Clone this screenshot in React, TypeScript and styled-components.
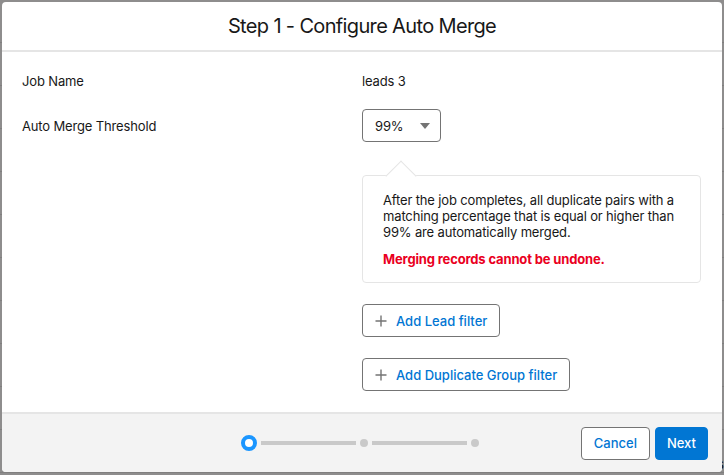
import styled, { createGlobalStyle } from 'styled-components';

const GlobalStyle = createGlobalStyle`
  html, body {
    margin: 0;
    padding: 0;
  }
  body {
    font-family: Inter, "Liberation Sans", Arial, sans-serif;
    font-size: 13px;
    letter-spacing: -0.15px;
    color: #181818;
    background: #fff;
  }
  * {
    box-sizing: border-box;
  }
`;

const Page = styled.div`
  position: relative;
  width: 724px;
  height: 475px;
  overflow: hidden;
  background: #fff;
`;

const BgRow = styled.div`
  height: 43px;
  border-bottom: 1px solid #e5e5e5;
  display: flex;
  align-items: flex-end;
  padding: 0 0 0 8px;
  font-size: 13px;
  color: #181818;
`;

const BgCell = styled.span<{ $w: number }>`
  width: ${(p) => p.$w}px;
  flex: none;
  white-space: nowrap;
`;

const Backdrop = styled.div`
  position: absolute;
  inset: 0;
  background: rgba(8, 7, 7, 0.46);
  padding: 2px;
`;

const Modal = styled.div`
  width: 720px;
  height: 470px;
  background: #fff;
  border-radius: 4px;
  display: flex;
  flex-direction: column;
  overflow: hidden;
`;

const Header = styled.header`
  padding: 12px 16px 11px;
  border-bottom: 2px solid #e5e5e5;
  text-align: center;
`;

const Title = styled.h2`
  margin: 0;
  font-size: 20px;
  line-height: 25px;
  font-weight: 400;
  letter-spacing: -0.65px;
  color: #181818;
`;

const Body = styled.div`
  flex: 1;
  padding: 12px 21px 0 20px;
  display: flex;
  flex-direction: column;
  gap: 12px;
`;

const Row = styled.div`
  display: grid;
  grid-template-columns: 340px 1fr;
  align-items: center;
  min-height: 33px;
`;

const Label = styled.span`
  line-height: 18px;
`;

const Value = styled.div`
  display: flex;
  flex-direction: column;
  align-items: flex-start;
`;

const Select = styled.div`
  width: 79px;
  height: 33px;
  border: 1px solid #747474;
  border-radius: 4px;
  display: flex;
  align-items: center;
  justify-content: space-between;
  padding: 0 10px 0 12px;
  font-size: 13px;
`;

const Caret = styled.span`
  width: 0;
  height: 0;
  border-left: 5px solid transparent;
  border-right: 5px solid transparent;
  border-top: 6px solid #747474;
`;

const Stack = styled.div`
  display: flex;
  flex-direction: column;
  align-items: flex-start;
  gap: 21px;
  margin-top: -12px;
`;

const Popover = styled.div`
  position: relative;
  margin-top: 33px;
  width: 339px;
  border: 1px solid #e5e5e5;
  border-radius: 4px;
  padding: 16px 20px 15px;
  background: #fff;

  &::before {
    content: '';
    position: absolute;
    top: -11px;
    left: 27px;
    width: 21px;
    height: 21px;
    background: #fff;
    border-left: 1px solid #e5e5e5;
    border-top: 1px solid #e5e5e5;
    transform: rotate(45deg);
  }
`;

const PopText = styled.p<{ $danger?: boolean }>`
  position: relative;
  margin: 0;
  line-height: 16px;
  color: ${(p) => (p.$danger ? '#ea001e' : '#181818')};
  font-weight: ${(p) => (p.$danger ? 700 : 400)};
  & + & {
    margin-top: 11px;
  }
`;

const Button = styled.button<{ $brand?: boolean }>`
  height: 33px;
  border-radius: 4px;
  padding: 0 ${(p) => (p.$brand ? '11px' : '12px')};
  font-family: inherit;
  font-size: 13px;
  font-weight: 500;
  letter-spacing: 0;
  display: inline-flex;
  align-items: center;
  gap: 9px;
  cursor: pointer;
  border: 1px solid ${(p) => (p.$brand ? '#0176d3' : '#747474')};
  background: ${(p) => (p.$brand ? '#0176d3' : '#fff')};
  color: ${(p) => (p.$brand ? '#fff' : '#0176d3')};
`;

const Footer = styled.footer`
  border-top: 2px solid #e5e5e5;
  background: #f3f3f3;
  height: 60px;
  padding: 0 14px 0 14px;
  display: grid;
  grid-template-columns: 1fr auto 1fr;
  align-items: center;
`;

const Actions = styled.div`
  display: flex;
  justify-content: flex-end;
  gap: 5px;
`;

const Progress = styled.div`
  display: flex;
  align-items: center;
  margin-left: -4px;
`;

const Step = styled.span<{ $active?: boolean }>`
  flex: none;
  width: ${(p) => (p.$active ? '16px' : '8px')};
  height: ${(p) => (p.$active ? '16px' : '8px')};
  border-radius: 50%;
  background: ${(p) => (p.$active ? '#fff' : '#c9c9c9')};
  border: ${(p) => (p.$active ? '4px solid #1b96ff' : 'none')};
`;

const Track = styled.span`
  width: 95px;
  height: 4px;
  background: #c9c9c9;
  margin: 0 4px;
`;

function Plus() {
  return (
    <svg width="12" height="12" viewBox="0 0 12 12" fill="none">
      <path d="M6 0.5v11M0.5 6h11" stroke="#747474" strokeWidth="1.4" />
    </svg>
  );
}

export default function App() {
  const bgRows = Array.from({ length: 10 });
  return (
    <>
      <GlobalStyle />
      <Page>
        {bgRows.map((_, i) => (
          <BgRow key={i} />
        ))}
        <BgRow>
          <BgCell $w={280}>Lead</BgCell>
          <BgCell $w={190}>Completed</BgCell>
          <BgCell $w={240}>3 Duplicate Groups (15 Items, 10 Records)</BgCell>
        </BgRow>
        <Backdrop>
          <Modal>
            <Header>
              <Title>Step 1 - Configure Auto Merge</Title>
            </Header>
            <Body>
              <Row>
                <Label>Job Name</Label>
                <Value>leads 3</Value>
              </Row>
              <Row>
                <Label>Auto Merge Threshold</Label>
                <Value>
                  <Select>
                    99%
                    <Caret />
                  </Select>
                </Value>
              </Row>
              <Row>
                <span />
                <Stack>
                  <Popover>
                    <PopText>
                      After the job completes, all duplicate pairs with a matching percentage that is
                      equal or higher than 99% are automatically merged.
                    </PopText>
                    <PopText $danger>Merging records cannot be undone.</PopText>
                  </Popover>
                  <Button>
                    <Plus />
                    Add Lead filter
                  </Button>
                  <Button>
                    <Plus />
                    Add Duplicate Group filter
                  </Button>
                </Stack>
              </Row>
            </Body>
            <Footer>
              <span />
              <Progress>
                <Step $active />
                <Track />
                <Step />
                <Track />
                <Step />
              </Progress>
              <Actions>
                <Button>Cancel</Button>
                <Button $brand>Next</Button>
              </Actions>
            </Footer>
          </Modal>
        </Backdrop>
      </Page>
    </>
  );
}
